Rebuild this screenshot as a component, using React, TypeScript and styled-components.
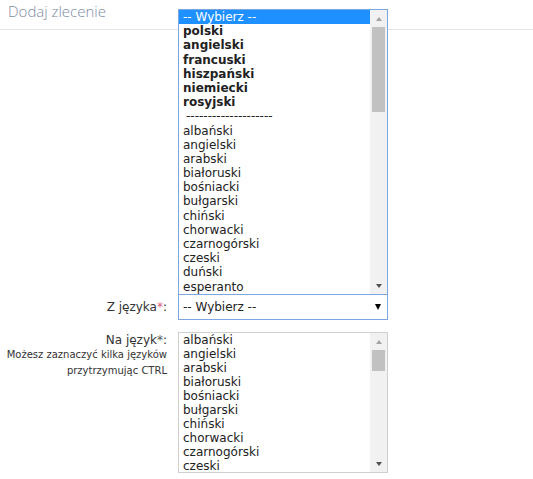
import React from 'react';
import styled, {createGlobalStyle} from 'styled-components';

const GlobalStyle = createGlobalStyle`
  body {
    margin: 0;
    background: #fff;
    font-family: "DejaVu Sans", Verdana, sans-serif;
  }
`;

const Page = styled.div`
  width: 533px;
  height: 479px;
  overflow: hidden;
`;

const Header = styled.div`
  height: 29px;
  border-bottom: 1px solid #e5e5e5;
  padding-left: 8px;
`;

const Title = styled.h2`
  margin: 0;
  font-family: "Open Sans", sans-serif;
  font-weight: 300;
  font-size: 15px;
  line-height: 22px;
  color: #7d8ca3;
`;

const Form = styled.div`
  padding-top: 264px;
  display: grid;
  row-gap: 12px;
`;

const Row = styled.div`
  display: grid;
  grid-template-columns: 167px 210px;
  column-gap: 11px;
  align-items: start;
`;

const Label = styled.div<{$tall?: boolean}>`
  text-align: right;
  font-size: 12px;
  color: #333;
  line-height: ${(p) => (p.$tall ? '26px' : '14px')};
  padding-top: ${(p) => (p.$tall ? '0' : '1px')};
`;

const Star = styled.span<{$red?: boolean}>`
  color: ${(p) => (p.$red ? '#e0607e' : '#555')};
`;

const Hint = styled.div`
  font-size: 10px;
  line-height: 16px;
  color: #333;
`;

const Select = styled.div`
  position: relative;
  box-sizing: border-box;
  height: 26px;
  border: 1px solid #7ea6e0;
  display: flex;
  align-items: center;
  justify-content: space-between;
  padding: 0 6px 0 4px;
  font-size: 12px;
  color: #222;
`;

const Caret = styled.span`
  width: 0;
  height: 0;
  border-left: 3px solid transparent;
  border-right: 3px solid transparent;
  border-top: 6px solid #000;
`;

const Popup = styled.div`
  position: absolute;
  left: -1px;
  right: -1px;
  bottom: calc(100% + 1px);
  height: 285px;
  box-sizing: border-box;
  border: 1px solid #7ea6e0;
  border-bottom: none;
  background: #fff;
  display: grid;
  grid-template-columns: 1fr 17px;
`;

const ListBox = styled.div`
  box-sizing: border-box;
  height: 141px;
  border: 1px solid #cfcfcf;
  display: grid;
  grid-template-columns: 1fr 17px;
`;

const Options = styled.div`
  overflow: hidden;
`;

const Option = styled.div<{$bold?: boolean; $selected?: boolean; $h: number}>`
  height: ${(p) => p.$h}px;
  line-height: ${(p) => p.$h}px;
  padding-left: 4px;
  font-size: 12px;
  white-space: nowrap;
  font-weight: ${(p) => (p.$bold ? 700 : 400)};
  color: ${(p) => (p.$selected ? '#fff' : '#222')};
  background: ${(p) => (p.$selected ? '#1e90ff' : 'transparent')};
`;

const Separator = styled(Option)`
  padding-left: 7px;
`;

const Bar = styled.div`
  background: #f1f1f1;
  display: flex;
  flex-direction: column;
`;

const ArrowBox = styled.div`
  height: 17px;
  display: flex;
  align-items: center;
  justify-content: center;
`;

const Arrow = styled.span<{$up?: boolean; $dim?: boolean}>`
  width: 0;
  height: 0;
  border-left: 3.5px solid transparent;
  border-right: 3.5px solid transparent;
  ${(p) =>
    p.$up
      ? `border-bottom: 4px solid ${p.$dim ? '#a3a3a3' : '#505050'};`
      : `border-top: 4px solid ${p.$dim ? '#a3a3a3' : '#505050'};`}
`;

const Track = styled.div`
  flex: 1;
  padding: 0 2px;
`;

const Thumb = styled.div`
  background: #c1c1c1;
`;

function Scrollbar({top, size}: {top: number; size: number}) {
  return (
    <Bar>
      <ArrowBox>
        <Arrow $up $dim />
      </ArrowBox>
      <Track>
        <Thumb style={{marginTop: top, height: size}} />
      </Track>
      <ArrowBox>
        <Arrow />
      </ArrowBox>
    </Bar>
  );
}

const popular = ['polski', 'angielski', 'francuski', 'hiszpański', 'niemiecki', 'rosyjski'];

const languages = [
  'albański',
  'angielski',
  'arabski',
  'białoruski',
  'bośniacki',
  'bułgarski',
  'chiński',
  'chorwacki',
  'czarnogórski',
  'czeski',
  'duński',
  'esperanto',
];

export default function App() {
  return (
    <Page>
      <GlobalStyle />
      <Header>
        <Title>Dodaj zlecenie</Title>
      </Header>
      <Form>
        <Row>
          <Label $tall>
            Z języka<Star $red>*</Star>:
          </Label>
          <Select>
            <span>-- Wybierz --</span>
            <Caret />
            <Popup>
              <Options>
                <Option $h={14.2} $selected>
                  -- Wybierz --
                </Option>
                {popular.map((l) => (
                  <Option $h={14.2} $bold key={l}>
                    {l}
                  </Option>
                ))}
                <Separator $h={14.2}>--------------------</Separator>
                {languages.map((l) => (
                  <Option $h={14.2} key={l}>
                    {l}
                  </Option>
                ))}
              </Options>
              <Scrollbar top={0} size={85} />
            </Popup>
          </Select>
        </Row>
        <Row>
          <Label>
            Na język<Star>*</Star>:
            <Hint>
              Możesz zaznaczyć kilka języków
              <br />
              przytrzymując CTRL
            </Hint>
          </Label>
          <ListBox>
            <Options>
              {languages.slice(0, 10).map((l) => (
                <Option $h={14} key={l}>
                  {l}
                </Option>
              ))}
            </Options>
            <Scrollbar top={0} size={21} />
          </ListBox>
        </Row>
      </Form>
    </Page>
  );
}
